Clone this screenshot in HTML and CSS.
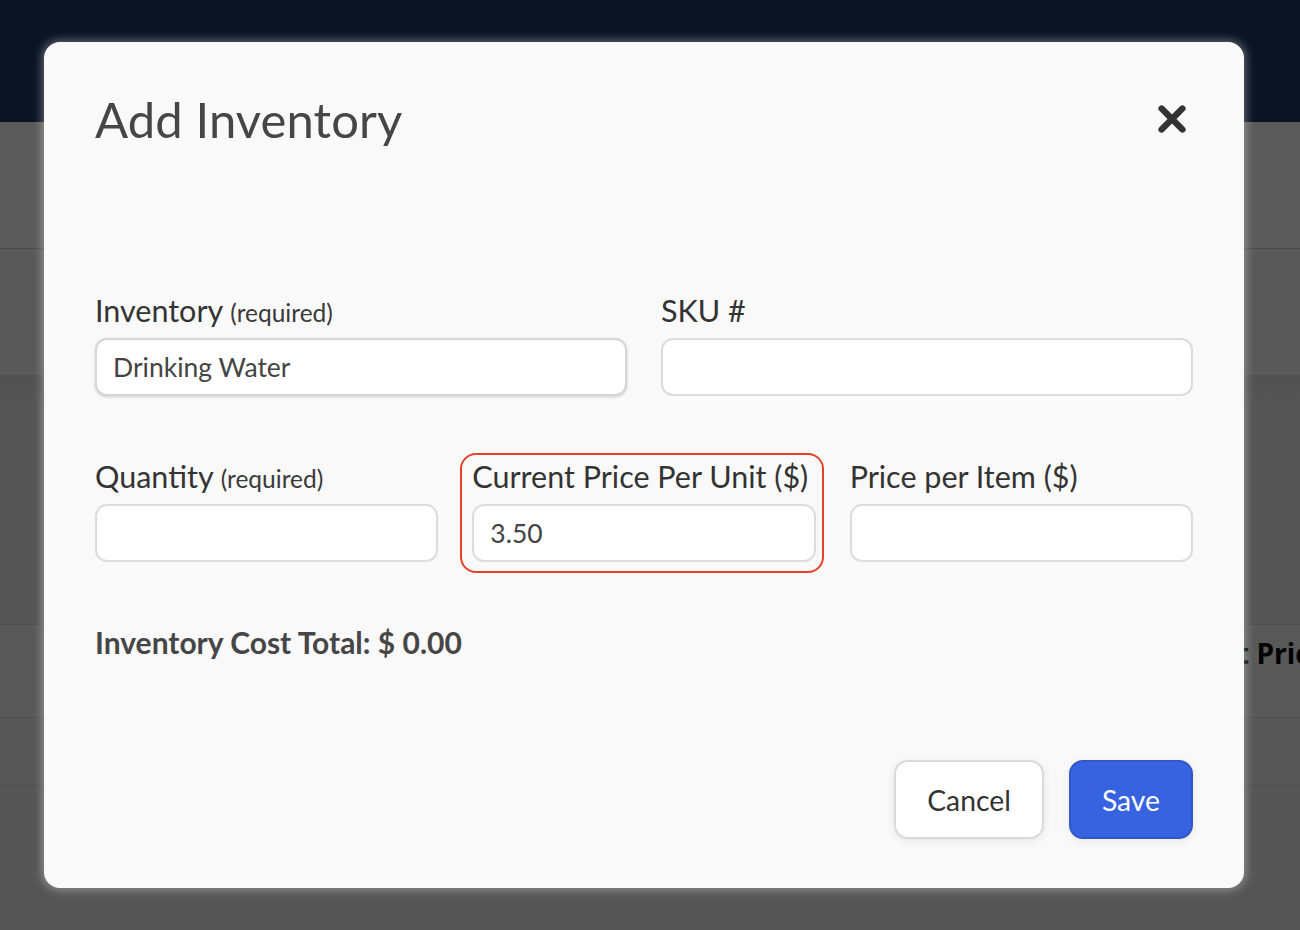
FILE: index.html
```html
<!DOCTYPE html>
<html lang="en">
<head>
<meta charset="utf-8">
<title>Add Inventory</title>
<link rel="stylesheet" href="styles.css">
</head>
<body>
<div class="page">
  <div class="bg-header"></div>
  <div class="bg-band bg-band-a"></div>
  <div class="bg-band bg-band-b"></div>
  <div class="bg-gap"></div>
  <div class="bg-row bg-row-head"><span class="bg-col-title">Cost Price</span></div>
  <div class="bg-row bg-row-body"></div>
</div>

<div class="overlay">
  <div class="modal" role="dialog" aria-labelledby="modal-title">
    <div class="modal-head">
      <h1 id="modal-title" class="modal-title">Add Inventory</h1>
      <button class="close-btn" type="button" aria-label="Close">
        <svg width="28" height="28" viewBox="0 0 28 28" aria-hidden="true">
          <path d="M3.6 3.6 L24.4 24.4 M24.4 3.6 L3.6 24.4" stroke="#333" stroke-width="6.4" stroke-linecap="round" fill="none"/>
        </svg>
      </button>
    </div>

    <div class="form-row form-row-2">
      <div class="field">
        <label class="field-label">Inventory <span class="req">(required)</span></label>
        <input class="field-input field-input-raised" type="text" value="Drinking Water">
      </div>
      <div class="field">
        <label class="field-label">SKU #</label>
        <input class="field-input" type="text" value="">
      </div>
    </div>

    <div class="form-row form-row-3">
      <div class="field">
        <label class="field-label">Quantity <span class="req">(required)</span></label>
        <input class="field-input" type="text" value="">
      </div>
      <div class="field field-highlight">
        <label class="field-label">Current Price Per Unit ($)</label>
        <input class="field-input" type="text" value="3.50">
        <span class="highlight-ring"></span>
      </div>
      <div class="field">
        <label class="field-label">Price per Item ($)</label>
        <input class="field-input" type="text" value="">
      </div>
    </div>

    <div class="total">Inventory Cost Total: $ 0.00</div>

    <div class="actions">
      <button class="btn btn-cancel" type="button">Cancel</button>
      <button class="btn btn-save" type="button">Save</button>
    </div>
  </div>
</div>
</body>
</html>
```

FILE: styles.css
```css
html, body {
  margin: 0;
  padding: 0;
}
body {
  width: 1300px;
  height: 930px;
  overflow: hidden;
  background: #555555;
  font-family: "Lato", "Noto Sans", sans-serif;
  position: relative;
}

/* dimmed page behind the dialog */
.page {
  display: flex;
  flex-direction: column;
}
.bg-header {
  height: 122px;
  background: #0c1424;
}
.bg-band {
  height: 126px;
}
.bg-band-a {
  background: #5a5a5a;
  border-bottom: 1px solid #4a4a4a;
}
.bg-band-b {
  background: #595959;
}
.bg-gap {
  height: 249px;
  background: linear-gradient(#515151, #555555 30px);
}
.bg-row {
  border-top: 1px solid #505050;
  background: #595959;
  display: flex;
  align-items: flex-start;
}
.bg-row-head {
  height: 92px;
}
.bg-row-body {
  height: 66px;
  border-bottom: 1px solid #505050;
  background: #565656;
}
.bg-col-title {
  padding-left: 1188px;
  padding-top: 9px;
  white-space: nowrap;
  font-family: "Open Sans", "Noto Sans", sans-serif;
  font-weight: 700;
  font-size: 28px;
  line-height: 38px;
  color: #000;
}

/* dialog */
.overlay {
  position: absolute;
  inset: 0;
  display: flex;
  justify-content: flex-start;
  align-items: flex-start;
  padding: 42px 0 0 44px;
}
.modal {
  width: 1200px;
  height: 846px;
  box-sizing: border-box;
  background: #f9f9f9;
  border-radius: 16px;
  box-shadow: 0 0 10px 2px rgba(255, 255, 255, 0.35);
  padding: 48px 51px 49px;
  display: flex;
  flex-direction: column;
}
.modal-head {
  display: flex;
  align-items: center;
  justify-content: space-between;
}
.modal-title {
  margin: 0;
  font-weight: 400;
  font-size: 49px;
  line-height: 58px;
  color: #464646;
  letter-spacing: 0.1px;
}
.close-btn {
  width: 42px;
  height: 42px;
  padding: 0;
  border: 0;
  background: transparent;
  display: flex;
  align-items: center;
  justify-content: center;
}

.form-row {
  display: grid;
  column-gap: 34px;
}
.form-row-2 {
  grid-template-columns: 1fr 1fr;
  margin-top: 144px;
}
.form-row-3 {
  grid-template-columns: 1fr 1fr 1fr;
  margin-top: 62px;
}
.field {
  display: flex;
  flex-direction: column;
  position: relative;
}
.field-label {
  font-size: 30.5px;
  line-height: 36px;
  height: 36px;
  color: #333;
  margin-bottom: 10px;
  white-space: nowrap;
}
.req {
  font-size: 24.5px;
  line-height: 1;
  color: #3a3a3a;
}
.field-input {
  height: 58px;
  box-sizing: border-box;
  border: 2px solid #dcdcdc;
  border-radius: 12px;
  background: #fff;
  padding: 0 16px;
  font-family: "Lato", "Noto Sans", sans-serif;
  font-size: 26.5px;
  color: #444;
  outline: none;
  width: 100%;
}
.field-input-raised {
  border-color: #d6d6d6;
  box-shadow: 0 1px 3px rgba(0, 0, 0, 0.18);
}
.highlight-ring {
  position: absolute;
  top: -5px;
  bottom: -11px;
  left: -12px;
  right: -8px;
  border: 2px solid #e4412c;
  border-radius: 16px;
  pointer-events: none;
}

.total {
  margin-top: 62px;
  font-size: 30px;
  line-height: 36px;
  font-weight: 700;
  color: #464646;
}

.actions {
  margin-top: auto;
  display: flex;
  justify-content: flex-end;
  gap: 25px;
}
.btn {
  height: 79px;
  box-sizing: border-box;
  border-radius: 14px;
  font-family: "Lato", "Noto Sans", sans-serif;
  font-size: 28.3px;
  padding: 0;
  border: 2px solid transparent;
  text-align: center;
}
.btn-cancel {
  width: 150px;
  background: #fff;
  border-color: #dadada;
  color: #333;
  box-shadow: 0 2px 8px rgba(0, 0, 0, 0.08);
}
.btn-save {
  width: 124px;
  background: #3763e0;
  border-color: #3358c6;
  color: #fff;
  box-shadow: 0 2px 8px rgba(0, 0, 0, 0.08);
}
```
